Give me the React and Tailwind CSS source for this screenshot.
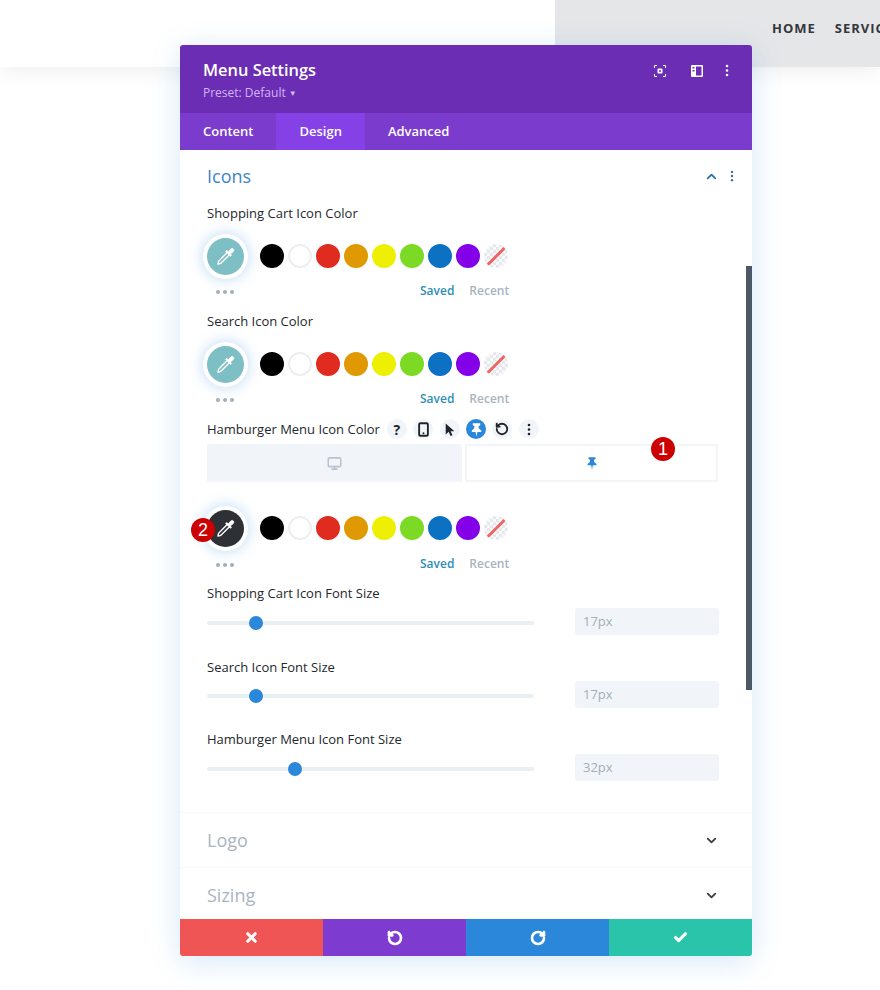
import { Check, ChevronDown, ChevronUp, Monitor, RotateCcw, RotateCw, Smartphone, X } from "lucide-react";

const SWATCHES = ["#000000", "#ffffff", "#e02b20", "#e09900", "#edf000", "#7cda24", "#0c71c3", "#8300e9"];

function Dots({ className = "" }) {
  return (
    <svg viewBox="0 0 4 16" className={className} fill="currentColor">
      <circle cx="2" cy="2.5" r="1.6" />
      <circle cx="2" cy="8" r="1.6" />
      <circle cx="2" cy="13.5" r="1.6" />
    </svg>
  );
}

function Dropper() {
  return (
    <svg viewBox="0 0 24 24" className="w-[21px] h-[21px]" fill="none" stroke="#ffffff">
      <path d="M14 7.500 10 11.500 4.500 17c-1 1-.8 1.600-1 3.500 1.900-.2 2.500 0 3.500-1L16.500 10" strokeWidth="1.600" />
      <path d="M12.500 5.500 18.500 11.500" strokeWidth="2.400" />
      <path d="M15 7 18 3.500c1-1 2.300-1 3 0s.6 2-.4 3L17 9.500z" fill="#ffffff" strokeWidth="1" />
    </svg>
  );
}

function Pin({ className = "" }) {
  return (
    <svg viewBox="0 0 24 24" className={className} fill="currentColor">
      <path d="M6 2h12v3l-2.500 1.500V10l4 3.500V16h-6l-1.500 7-1.500-7H4.500v-2.500l4-3.500V6.500L6 5z" />
    </svg>
  );
}

function ColorRow({ color, marginTop = "mt-[15px]", savedTop = "mt-[8px]" }) {
  return (
    <div>
      <div className={`flex items-center gap-4 h-[38px] ${marginTop}`}>
        <div
          className="w-[37px] h-[37px] rounded-full flex items-center justify-center shadow-[0_0_0_4px_#ffffff,0_0_14px_5px_rgba(43,135,218,0.28)]"
          style={{ backgroundColor: color }}
        >
          <Dropper />
        </div>
        <div className="flex gap-1">
          {SWATCHES.map((s) => (
            <div
              key={s}
              className={s === "#ffffff" ? "w-6 h-6 rounded-full border-2 border-[#eceef0] bg-white" : "w-6 h-6 rounded-full"}
              style={{ backgroundColor: s }}
            />
          ))}
          <div className="w-6 h-6 rounded-full bg-[repeating-conic-gradient(#e6e8eb_0%_25%,#f8f9fa_0%_50%)] bg-[length:6px_6px] flex items-center justify-center overflow-hidden">
            <div className="w-[24px] h-[3px] bg-[#ef6464] -rotate-45" />
          </div>
        </div>
      </div>
      <div className={`flex items-center h-4 ${savedTop}`}>
        <div className="flex gap-[3px] w-[213px] pl-[9px] mt-[1px]">
          <span className="w-[4px] h-[4px] rounded-full bg-[#a3aeb8]" />
          <span className="w-[4px] h-[4px] rounded-full bg-[#a3aeb8]" />
          <span className="w-[4px] h-[4px] rounded-full bg-[#a3aeb8]" />
        </div>
        <span className="text-[12px] font-semibold text-[#2f8fb5]">Saved</span>
        <span className="text-[12px] font-semibold text-[#a9b4be] ml-[15px]">Recent</span>
      </div>
    </div>
  );
}

function Label({ children, className = "" }) {
  return <div className={`h-[18px] leading-[18px] text-[13px] font-medium text-[#24282d] ${className}`}>{children}</div>;
}

function SliderRow({ value, position, className = "" }) {
  return (
    <div className={`flex items-center justify-between h-[27px] ${className}`}>
      <div className="relative w-[327px] h-[4px] mt-[3px] rounded-full bg-[#e8eff5]">
        <div
          className="absolute top-1/2 w-[14px] h-[14px] -ml-[7px] -mt-[7px] rounded-full bg-[#2b87da]"
          style={{ left: position + "px" }}
        />
      </div>
      <div className="w-[144px] h-[27px] rounded-[3px] bg-[#f1f5f9] pl-2 leading-[27px] text-[13px] text-[#a3aeb8]">{value}</div>
    </div>
  );
}

function ClosedSection({ title }) {
  return (
    <div className="h-[55px] shrink-0 border-t border-[#f8f9fa] flex items-center justify-between pl-[27px] pr-[33px]">
      <span className="text-[18px] text-[#a9b4c2]">{title}</span>
      <ChevronDown className="w-[15px] h-[15px] text-[#3b4047]" strokeWidth={3} />
    </div>
  );
}

const TOOLS = [
  { key: "help", node: <span className="text-[14px] font-bold text-[#20242a]">?</span> },
  { key: "phone", node: <Smartphone className="w-[15px] h-[15px] text-[#20242a]" strokeWidth={3} /> },
  {
    key: "cursor",
    node: (
      <svg viewBox="0 0 24 24" className="w-[13px] h-[13px]" fill="#20242a">
        <path d="M5 1v20l5.500-5 3.500 8 3.500-1.500-3.500-7.500H21z" />
      </svg>
    ),
  },
  { key: "pin", active: true, node: <Pin className="w-[15px] h-[15px] text-white" /> },
  { key: "undo", node: <RotateCcw className="w-[14px] h-[14px] text-[#20242a]" strokeWidth={3.2} /> },
  { key: "more", node: <Dots className="w-[4px] h-[13px] text-[#20242a]" /> },
];

export default function App() {
  return (
    <div className="relative w-full h-[990px] overflow-hidden bg-white font-['Open_Sans',sans-serif]">
      {/* page behind the modal */}
      <div className="flex h-[67px] shadow-[0_2px_24px_rgba(0,0,0,0.08)]">
        <div className="w-[555px] bg-white" />
        <div className="flex-1 bg-[#e5e6e8] flex items-center gap-[19px] pl-[217px] pb-[10px] overflow-hidden whitespace-nowrap text-[13px] font-bold tracking-[1px] text-[#33363b]">
          <span>HOME</span>
          <span>SERVICES</span>
        </div>
      </div>

      {/* settings modal */}
      <div className="absolute left-[180px] top-[45px] w-[572px] h-[911px] flex flex-col rounded-[3px] bg-white shadow-[0_5px_30px_rgba(43,135,218,0.2)]">
        <div className="h-[68px] shrink-0 rounded-t-[3px] bg-[#6a2db3] flex justify-between pl-[23px] pr-[23px]">
          <div>
            <div className="mt-[14px] text-[16.4px] leading-[22px] font-semibold text-white">Menu Settings</div>
            <div className="mt-[4px] text-[12px] leading-[16px] font-medium text-[#d3b5f7]">
              Preset: Default <span className="text-[8px] align-[1px]">▼</span>
            </div>
          </div>
          <div className="flex items-center h-[51px] text-white">
            <svg viewBox="0 0 12 12" className="w-[12px] h-[12px]" fill="none" stroke="#ffffff">
              <path d="M.5 3V.5H3M9 .5h2.500V3M11.500 9v2.500H9M3 11.500H.5V9" strokeWidth="1" />
              <rect x="3.500" y="3.500" width="5" height="5" rx="1" fill="#ffffff" stroke="none" />
              <circle cx="6" cy="6" r="1" fill="#6a2db3" stroke="none" />
            </svg>
            <svg viewBox="0 0 12 12" className="w-[12px] h-[12px] ml-[25px]">
              <rect width="12" height="12" rx="1" fill="#ffffff" />
              <rect x="5" y="1.500" width="5.500" height="9" fill="#6a2db3" />
              <rect x="1.500" y="2" width="2" height="1.500" fill="#6a2db3" />
              <rect x="1.500" y="5" width="2" height="1.500" fill="#6a2db3" />
            </svg>
            <Dots className="w-[4px] h-[13px] ml-[22px]" />
          </div>
        </div>

        <div className="h-[37px] shrink-0 bg-[#7b3bcc] flex text-[13px] font-semibold text-white">
          <div className="px-[23px] flex items-center">Content</div>
          <div className="px-[23px] flex items-center bg-[#8540e6]">Design</div>
          <div className="px-[23px] flex items-center">Advanced</div>
        </div>

        <div className="h-[769px] shrink-0 overflow-hidden flex flex-col">
          <div className="pl-[27px] pr-[33px] shrink-0">
            <div className="h-[52px] mb-[2px] -mr-[15px] flex items-center justify-between">
              <span className="text-[18px] text-[#3e86c6]">Icons</span>
              <div className="flex items-center gap-[11px] text-[#2b87da]">
                <ChevronUp className="w-[15px] h-[15px] text-[#2b75ad]" strokeWidth={3} />
                <Dots className="w-[4px] h-[12px] text-[#3f6f95]" />
              </div>
            </div>

            <Label>Shopping Cart Icon Color</Label>
            <ColorRow color="#7ebec5" />

            <Label className="mt-[13px]">Search Icon Color</Label>
            <ColorRow color="#7ebec5" />

            <div className="flex items-center mt-[13px] h-[18px]">
              <Label>Hamburger Menu Icon Color</Label>
              <div className="flex gap-[6.4px] ml-[7px]">
                {TOOLS.map((t) => (
                  <div
                    key={t.key}
                    className={
                      t.active
                        ? "w-[20px] h-[20px] rounded-full bg-[#2b87da] flex items-center justify-center"
                        : "w-[20px] h-[20px] rounded-full bg-[#f1f5f9] flex items-center justify-center"
                    }
                  >
                    {t.node}
                  </div>
                ))}
              </div>
            </div>

            <div className="flex gap-[3px] h-[38px] mt-[6px] w-[511px]">
              <div className="w-[255px] bg-[#f1f5f9] flex items-center justify-center">
                <Monitor className="w-[15px] h-[15px] text-[#b9c4cf]" strokeWidth={2.5} />
              </div>
              <div className="flex-1 border-2 border-[#f3f5f8] flex items-center justify-center">
                <Pin className="w-[14px] h-[14px] text-[#2b87da]" />
              </div>
            </div>

            <ColorRow color="#2d3034" marginTop="mt-[27px]" savedTop="mt-[9px]" />

            <div className="w-[512px]">
              <Label className="mt-[12px]">Shopping Cart Icon Font Size</Label>
              <SliderRow value="17px" position={48.5} className="mt-[6px]" />
              <Label className="mt-[23px]">Search Icon Font Size</Label>
              <SliderRow value="17px" position={48.5} className="mt-[5px]" />
              <Label className="mt-[22px]">Hamburger Menu Icon Font Size</Label>
              <SliderRow value="32px" position={88} className="mt-[6px]" />
            </div>
          </div>

          <div className="mt-[31px]">
            <ClosedSection title="Logo" />
            <ClosedSection title="Sizing" />
          </div>
        </div>

        <div className="h-[37px] shrink-0 grid grid-cols-4 rounded-b-[3px] overflow-hidden text-white">
          <div className="bg-[#ef5555] flex items-center justify-center">
            <X className="w-[15px] h-[15px]" strokeWidth={5} />
          </div>
          <div className="bg-[#7e3bd0] flex items-center justify-center">
            <RotateCcw className="w-[16px] h-[16px]" strokeWidth={4} />
          </div>
          <div className="bg-[#2b87da] flex items-center justify-center">
            <RotateCw className="w-[16px] h-[16px]" strokeWidth={4} />
          </div>
          <div className="bg-[#29c4a9] flex items-center justify-center">
            <Check className="w-[15px] h-[15px]" strokeWidth={5} />
          </div>
        </div>

        {/* scrollbar */}
        <div className="absolute right-0 top-[221px] w-[6px] h-[424px] bg-[#4c5866]" />
      </div>

      {/* numbered annotations */}
      <div className="absolute left-[651px] top-[437px] w-6 h-6 rounded-full bg-[#cc0000] flex items-center justify-center text-[18px] text-white font-['Liberation_Sans',sans-serif]">1</div>
      <div className="absolute left-[191px] top-[518px] w-6 h-6 rounded-full bg-[#cc0000] flex items-center justify-center text-[18px] text-white font-['Liberation_Sans',sans-serif]">2</div>
    </div>
  );
}
